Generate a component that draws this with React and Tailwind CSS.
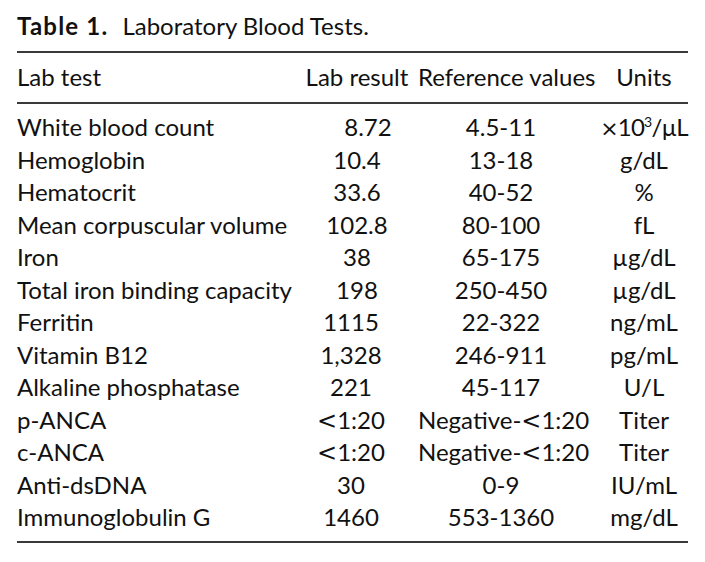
import React from "react";

const rows = [
  ["White blood count", "8.72", "4.5-11", "unit-wbc"],
  ["Hemoglobin", "10.4", "13-18", "g/dL"],
  ["Hematocrit", "33.6", "40-52", "%"],
  ["Mean corpuscular volume", "102.8", "80-100", "fL"],
  ["Iron", "38", "65-175", "µg/dL"],
  ["Total iron binding capacity", "198", "250-450", "µg/dL"],
  ["Ferritin", "1115", "22-322", "ng/mL"],
  ["Vitamin B12", "1,328", "246-911", "pg/mL"],
  ["Alkaline phosphatase", "221", "45-117", "U/L"],
  ["p-ANCA", "<1:20", "Negative-<1:20", "Titer"],
  ["c-ANCA", "<1:20", "Negative-<1:20", "Titer"],
  ["Anti-dsDNA", "30", "0-9", "IU/mL"],
  ["Immunoglobulin G", "1460", "553-1360", "mg/dL"],
];

function Lt() {
  return (
    <span className="leading-none" style={{ fontFamily: "'DejaVu Sans', sans-serif" }}>
      &lt;
    </span>
  );
}

function Val({ v }) {
  if (v.includes("<")) {
    const [pre, post] = v.split("<");
    return (
      <span>
        {pre}
        <Lt />
        {post}
      </span>
    );
  }
  return <span>{v}</span>;
}

function Unit({ u }) {
  if (u === "unit-wbc") {
    return (
      <span className="tracking-[-0.8px]">
        <span className="leading-none text-[22px]" style={{ fontFamily: "'DejaVu Sans', sans-serif" }}>×</span>10
        <sup className="text-[14px] leading-none relative top-[-9px] align-baseline">3</sup>/µL
      </span>
    );
  }
  return <span>{u}</span>;
}

function resultClass(i, v) {
  if (v === "8.72") return "text-center pl-[22px]";
  if (i >= 6) return "text-center pr-[12px]";
  return "text-center";
}

export default function App() {
  return (
    <div
      className="w-[705px] h-[562px] bg-white text-[#111] text-[24px] leading-[32.5px] px-[17px] pt-[9.5px]"
      style={{ fontFamily: "Lato, 'Open Sans', sans-serif" }}
    >
      <div className="pb-[9px] whitespace-nowrap">
        <span className="font-bold tracking-[1.2px]">Table 1.</span>
        <span className="ml-[14px]">Laboratory Blood Tests.</span>
      </div>
      <div className="border-t-2 border-b-2 border-[#3a3a3a] grid grid-cols-[279px_122px_166px_104px] py-[8px] whitespace-nowrap">
        <div>Lab test</div>
        <div className="text-center">Lab result</div>
        <div className="text-center">Reference values</div>
        <div className="text-center pl-[16px]">Units</div>
      </div>
      <div className="border-b-2 border-[#3a3a3a] grid grid-cols-[279px_122px_166px_104px] pt-[7.5px] pb-[7px] whitespace-nowrap">
        {rows.map((r, i) => (
          <React.Fragment key={r[0]}>
            <div>{r[0]}</div>
            <div className={resultClass(i, r[1])}>
              <Val v={r[1]} />
            </div>
            <div className="text-center">
              <Val v={r[2]} />
            </div>
            <div className="text-center pl-[16px]">
              <Unit u={r[3]} />
            </div>
          </React.Fragment>
        ))}
      </div>
    </div>
  );
}
